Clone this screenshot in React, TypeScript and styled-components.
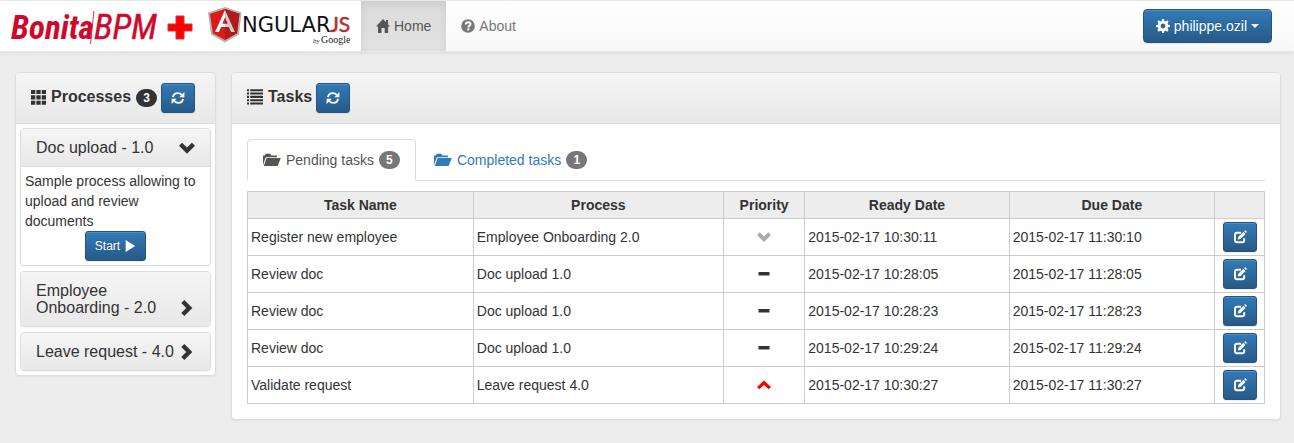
import React from "react";
import styled, { createGlobalStyle, css } from "styled-components";

const GlobalStyle = createGlobalStyle`
  * { box-sizing: border-box; }
  body {
    margin: 0;
    background: #ededed;
    color: #333;
    font-family: "Liberation Sans", Arial, sans-serif;
    font-size: 14px;
    line-height: 20px;
  }
  button { font-family: inherit; cursor: pointer; }
  a { text-decoration: none; }
`;

/* ---------- icons ---------- */

const shapes = {
  home: (
    <>
      <path d="M7 0 14 7.4H12.1V14H8.7V9H5.5V14H2V7.4H0Z" />
      <path d="M10 1h2v4h-2z" />
    </>
  ),
  question: (
    <>
      <circle cx="7" cy="7" r="6.8" />
      <path
        d="M4.7 5.600C4.700 4 5.700 3.300 7.100 3.300S9.500 4.100 9.500 5.300C9.500 6.700 7.300 6.600 7.300 8.400"
        fill="none"
        stroke="#fff"
        strokeWidth="1.900"
      />
      <path d="M6.300 9.400h2v2h-2z" fill="#fff" />
    </>
  ),
  cog: (
    <>
      <circle cx="7" cy="7" r="3.9" fill="none" stroke="currentColor" strokeWidth="2.9" />
      {[0, 45, 90, 135].map((a) => (
        <g key={a} transform={`rotate(${a} 7 7)`}>
          <path d="M5.7 2.4 6 0H8l.3 2.4zM5.7 11.6 6 14H8l.3-2.4z" />
        </g>
      ))}
    </>
  ),
  grid: (
    <path d="M0 0h4v3.8H0zM5 0h4v3.8H5zM10 0h4v3.8h-4zM0 5h4v3.8H0zM5 5h4v3.8H5zM10 5h4v3.8h-4zM0 10h4v3.8H0zM5 10h4v3.8H5zM10 10h4v3.8h-4z" />
  ),
  list: (
    <path d="M0 .2h1.800v1.800H0zM2.800.2H14v1.800H2.800zM0 3.100h1.800v1.800H0zM2.800 3.100H14v1.800H2.800zM0 6h1.800v1.800H0zM2.800 6H14v1.800H2.800zM0 8.900h1.800v1.800H0zM2.800 8.900H14v1.800H2.800zM0 11.800h1.800v1.800H0zM2.800 11.800H14v1.800H2.800z" />
  ),
  refresh: (
    <>
      <path
        d="M2 6.200C2.400 3.600 4.400 2.100 6.800 2.100c1.600 0 2.900.7 3.900 1.800M12 7.800c-.4 2.600-2.400 4.100-4.800 4.100-1.600 0-2.900-.7-3.900-1.800"
        fill="none"
        stroke="currentColor"
        strokeWidth="1.900"
      />
      <path d="M13.400 1v5.200H8.300zM.6 13V7.800h5.100z" />
    </>
  ),
  play: <path d="M2 0 13 7 2 14Z" />,
  edit: (
    <>
      <path
        d="M8 2.800H4C2.700 2.800 2 3.500 2 4.800v5.400c0 1.300.7 2 2 2h5.200c1.300 0 2-.7 2-2V8.200"
        fill="none"
        stroke="currentColor"
        strokeWidth="2"
      />
      <path d="M4.800 9.600 5.400 6.800 10.400 1.800 12.500 3.900 7.500 8.900ZM11.100 1.100l.7-.7c.3-.3.6-.3.9 0l1 1c.3.3.3.6 0 .9l-.7.700z" />
    </>
  ),
  chevronDown: <path d="M0 5 2.700 2.300 7 6.600l4.300-4.300L14 5 7 12Z" />,
  chevronRight: <path d="M4.700 0 2 2.700 6.300 7 2 11.300 4.700 14 11.700 7Z" />,
  menuUp: <path d="M0 9 7 2.400l7 6.600-2.300 2.300L7 6.900 2.300 11.300Z" />,
  minus: <path d="M1.500 5h11v3.500h-11z" />,
};

type IconName = keyof typeof shapes;

const Svg = styled.svg<{ $size: number }>`
  flex: none;
  align-self: center;
  display: block;
  width: ${(p) => p.$size}px;
  height: ${(p) => p.$size}px;
  fill: currentColor;
`;

const Icon = ({ name, size = 14 }: { name: IconName; size?: number }) => (
  <Svg $size={size} viewBox="0 0 14 14" aria-hidden="true">
    {shapes[name]}
  </Svg>
);

const FolderSvg = styled.svg`
  flex: none;
  display: block;
  width: 18px;
  height: 14px;
  fill: currentColor;
`;

const FolderIcon = () => (
  <FolderSvg viewBox="0 0 18 14" aria-hidden="true">
    <path d="M3.600 5h14.200L14.600 13H.8Z" />
    <path d="M0 12V2.400h1.800L2.600.8h4.700l.9 1.600h5.800v1.800H2.800Z" />
  </FolderSvg>
);

/* ---------- navigation bar ---------- */

const Navbar = styled.header`
  display: flex;
  align-items: stretch;
  height: 52px;
  border: solid #e7e7e7;
  border-width: 1px 0;
  background: linear-gradient(#fff, #f8f8f8);
  box-shadow: 0 1px 5px rgba(0, 0, 0, 0.08);
`;

const Brand = styled.a`
  display: flex;
  background: #fff;
`;

const BrandSvg = styled.svg`
  display: block;
  width: 361px;
  height: 50px;
`;

const NavLink = styled.a<{ $active?: boolean }>`
  display: flex;
  align-items: center;
  gap: 4px;
  padding: 0 15px;
  color: #777;
  ${(p) =>
    p.$active &&
    css`
      color: #555;
      background: linear-gradient(#dbdbdb, #e2e2e2);
      box-shadow: inset 0 3px 9px rgba(0, 0, 0, 0.08);
    `}
`;

const NavLinks = styled.nav`
  display: flex;
  flex: 1;
`;

const UserArea = styled.div`
  display: flex;
  align-items: center;
  padding-right: 22px;
`;

const Button = styled.button<{ $large?: boolean }>`
  display: inline-flex;
  align-items: center;
  justify-content: center;
  gap: 4px;
  min-width: 34px;
  height: ${(p) => (p.$large ? 34 : 30)}px;
  padding: 0 ${(p) => (p.$large ? 12 : 9)}px;
  border: 1px solid #245580;
  border-radius: ${(p) => (p.$large ? 4 : 3)}px;
  background: linear-gradient(#337ab7, #265a88);
  box-shadow: inset 0 1px 0 rgba(255, 255, 255, 0.15), 0 1px 1px rgba(0, 0, 0, 0.075);
  color: #fff;
  font-size: ${(p) => (p.$large ? 14 : 12)}px;
  text-shadow: 0 -1px 0 rgba(0, 0, 0, 0.2);
`;

const Caret = styled.span`
  border-top: 4px solid;
  border-right: 4px solid transparent;
  border-left: 4px solid transparent;
`;

/* ---------- panels ---------- */

const Page = styled.main`
  display: grid;
  grid-template-columns: 201px minmax(0, 1fr);
  gap: 15px;
  align-items: start;
  padding: 20px 13px 20px 15px;
`;

const Panel = styled.section`
  border: 1px solid #ddd;
  border-radius: 4px;
  background: #fff;
  box-shadow: 0 1px 2px rgba(0, 0, 0, 0.05);
`;

const PanelHeading = styled.div`
  display: flex;
  align-items: center;
  gap: 4px;
  height: 51px;
  padding: 0 15px;
  border-bottom: 1px solid #ddd;
  border-radius: 3px 3px 0 0;
  background: linear-gradient(#f5f5f5, #e8e8e8);
`;

const PanelTitle = styled.h2`
  display: flex;
  align-items: flex-end;
  gap: 5px;
  margin: 0;
  padding-bottom: 2px;
  font-size: 16px;
  line-height: 20px;
`;

const Badge = styled.span<{ $dark?: boolean }>`
  min-width: 21px;
  height: 18px;
  padding: 0 7px;
  border-radius: 9px;
  background: ${(p) => (p.$dark ? "#333" : "#777")};
  color: #fff;
  font-size: 12px;
  font-weight: bold;
  line-height: 18px;
  text-align: center;
`;

const ProcessList = styled.div`
  display: flex;
  flex-direction: column;
  gap: 5px;
  padding: 4px;
`;

const ProcessHeading = styled.button<{ $open?: boolean }>`
  display: flex;
  align-items: flex-end;
  justify-content: space-between;
  width: 100%;
  padding: 10px 15px;
  border: 0;
  border-bottom: ${(p) => (p.$open ? "1px solid #ddd" : "0")};
  border-radius: ${(p) => (p.$open ? "3px 3px 0 0" : "3px")};
  background: linear-gradient(#f5f5f5, #e8e8e8);
  color: #333;
  font-size: 16px;
  line-height: 17px;
  text-align: left;

  ${Svg} {
    align-self: flex-end;
  }
`;

const ProcessBody = styled.div`
  padding: 4px;
`;

const Description = styled.p`
  margin: 0;
`;

const Centered = styled.div`
  display: flex;
  justify-content: center;
`;

const TasksBody = styled.div`
  padding: 15px;
`;

const Tabs = styled.nav`
  display: flex;
  gap: 2px;
  margin-bottom: 10px;
  border-bottom: 1px solid #ddd;
`;

const Tab = styled.a<{ $active?: boolean }>`
  display: flex;
  align-items: center;
  gap: 5px;
  height: 42px;
  margin-bottom: -1px;
  padding: 0 15px;
  border: 1px solid transparent;
  border-radius: 4px 4px 0 0;
  color: #337ab7;
  ${(p) =>
    p.$active &&
    css`
      color: #555;
      background: #fff;
      border-color: #ddd #ddd #fff;
    `}
`;

const Table = styled.table`
  width: 100%;
  border-collapse: collapse;
  table-layout: fixed;
`;

const Col = styled.col<{ $width?: string }>`
  width: ${(p) => p.$width ?? "auto"};
`;

const Th = styled.th`
  height: 27px;
  padding: 0 3px;
  border: 1px solid #ccc;
  background: #ededed;
`;

const Td = styled.td`
  height: 37px;
  padding: 3px;
  border: 1px solid #ccc;
`;

const Priority = styled.span<{ $color: string }>`
  display: flex;
  justify-content: center;
  color: ${(p) => p.$color};
`;

const priorities = {
  low: { icon: "chevronDown", color: "#aaa" },
  normal: { icon: "minus", color: "#333" },
  high: { icon: "menuUp", color: "#f00" },
} as const;

const tasks: { name: string; process: string; priority: keyof typeof priorities; ready: string; due: string }[] = [
  { name: "Register new employee", process: "Employee Onboarding 2.0", priority: "low", ready: "2015-02-17 10:30:11", due: "2015-02-17 11:30:10" },
  { name: "Review doc", process: "Doc upload 1.0", priority: "normal", ready: "2015-02-17 10:28:05", due: "2015-02-17 11:28:05" },
  { name: "Review doc", process: "Doc upload 1.0", priority: "normal", ready: "2015-02-17 10:28:23", due: "2015-02-17 11:28:23" },
  { name: "Review doc", process: "Doc upload 1.0", priority: "normal", ready: "2015-02-17 10:29:24", due: "2015-02-17 11:29:24" },
  { name: "Validate request", process: "Leave request 4.0", priority: "high", ready: "2015-02-17 10:30:27", due: "2015-02-17 11:30:27" },
];

const BrandLogo = () => (
  <BrandSvg viewBox="0 0 361 50" role="img" aria-label="BonitaBPM + AngularJS by Google">
    <g fill="#d0082c" fontStyle="italic" fontFamily='"Liberation Sans Narrow", "Roboto Condensed", sans-serif'>
      <text x="11" y="38" fontSize="33" fontWeight="bold">Bonita</text>
      <text x="94" y="38" fontSize="35" stroke="#d0082c" strokeWidth="0.4">BPM</text>
      <path d="M93.500 10h.8L91 43h-.8z" />
    </g>
    <path d="M176 15h8v8h8v7h-8v8h-8v-8h-8v-7h8z" fill="#f00" stroke="#c63a3a" strokeWidth="1" />
    <path d="M225 6l16.500 5.500L239 33.500 225 41.500 211 33.500 208 11.500Z" fill="#b3b3b3" />
    <path d="M225 8l14.500 4.800L237 32.300 225 39 212.800 32.300 210 12.800Z" fill="#dd1b16" />
    <path d="M225 8l14.500 4.800L237 32.300 225 39Z" fill="#b01a1a" />
    <path d="M225 9l-10 22h3.900l2.100-5H225v-3.300h-2.600l2.600-6.500z" fill="#fff" />
    <path d="M225 9l9.900 22h-3.800l-2.200-5H225v-3.300h2.700L225 16.200z" fill="#ccc" />
    <text x="242" y="31" fontSize="21" fill="#111" fontFamily='"DejaVu Sans", sans-serif'>NGULAR</text>
    <text x="330" y="31" fontSize="21" fill="#b52e31" stroke="#b52e31" strokeWidth="0.5" fontFamily="Lato, sans-serif">JS</text>
    <g fontFamily='"Liberation Serif", serif' fill="#222">
      <text x="313" y="42" fontSize="7" fontStyle="italic">by</text>
      <text x="321" y="42" fontSize="10">Google</text>
    </g>
  </BrandSvg>
);

export default function App() {
  return (
    <>
      <GlobalStyle />
      <Navbar>
        <Brand href="#home">
          <BrandLogo />
        </Brand>
        <NavLinks>
          <NavLink href="#home" $active>
            <Icon name="home" />
            Home
          </NavLink>
          <NavLink href="#about">
            <Icon name="question" />
            About
          </NavLink>
        </NavLinks>
        <UserArea>
          <Button type="button" $large>
            <Icon name="cog" />
            philippe.ozil
            <Caret />
          </Button>
        </UserArea>
      </Navbar>

      <Page>
        <Panel>
          <PanelHeading>
            <PanelTitle>
              <Icon name="grid" size={15} />
              Processes
              <Badge $dark>3</Badge>
            </PanelTitle>
            <Button type="button" aria-label="Refresh processes">
              <Icon name="refresh" />
            </Button>
          </PanelHeading>
          <ProcessList>
            <Panel>
              <ProcessHeading type="button" $open aria-expanded="true">
                Doc upload - 1.0
                <Icon name="chevronDown" size={16} />
              </ProcessHeading>
              <ProcessBody>
                <Description>Sample process allowing to upload and review documents</Description>
                <Centered>
                  <Button type="button">
                    Start
                    <Icon name="play" size={12} />
                  </Button>
                </Centered>
              </ProcessBody>
            </Panel>
            <Panel>
              <ProcessHeading type="button" aria-expanded="false">
                Employee Onboarding - 2.0
                <Icon name="chevronRight" size={16} />
              </ProcessHeading>
            </Panel>
            <Panel>
              <ProcessHeading type="button" aria-expanded="false">
                Leave request - 4.0
                <Icon name="chevronRight" size={16} />
              </ProcessHeading>
            </Panel>
          </ProcessList>
        </Panel>

        <Panel>
          <PanelHeading>
            <PanelTitle>
              <Icon name="list" size={16} />
              Tasks
            </PanelTitle>
            <Button type="button" aria-label="Refresh tasks">
              <Icon name="refresh" />
            </Button>
          </PanelHeading>
          <TasksBody>
            <Tabs>
              <Tab href="#pending" $active>
                <FolderIcon />
                Pending tasks
                <Badge>5</Badge>
              </Tab>
              <Tab href="#completed">
                <FolderIcon />
                Completed tasks
                <Badge>1</Badge>
              </Tab>
            </Tabs>
            <Table>
              <colgroup>
                <Col $width="22.2%" />
                <Col $width="24.6%" />
                <Col $width="8%" />
                <Col $width="20.1%" />
                <Col />
                <Col $width="50px" />
              </colgroup>
              <thead>
                <tr>
                  <Th>Task Name</Th>
                  <Th>Process</Th>
                  <Th>Priority</Th>
                  <Th>Ready Date</Th>
                  <Th>Due Date</Th>
                  <Th aria-label="Actions" />
                </tr>
              </thead>
              <tbody>
                {tasks.map((task, i) => (
                  <tr key={i}>
                    <Td>{task.name}</Td>
                    <Td>{task.process}</Td>
                    <Td>
                      <Priority $color={priorities[task.priority].color} role="img" aria-label={task.priority}>
                        <Icon name={priorities[task.priority].icon} />
                      </Priority>
                    </Td>
                    <Td>{task.ready}</Td>
                    <Td>{task.due}</Td>
                    <Td>
                      <Centered>
                        <Button type="button" aria-label={`Open ${task.name}`}>
                          <Icon name="edit" />
                        </Button>
                      </Centered>
                    </Td>
                  </tr>
                ))}
              </tbody>
            </Table>
          </TasksBody>
        </Panel>
      </Page>
    </>
  );
}
